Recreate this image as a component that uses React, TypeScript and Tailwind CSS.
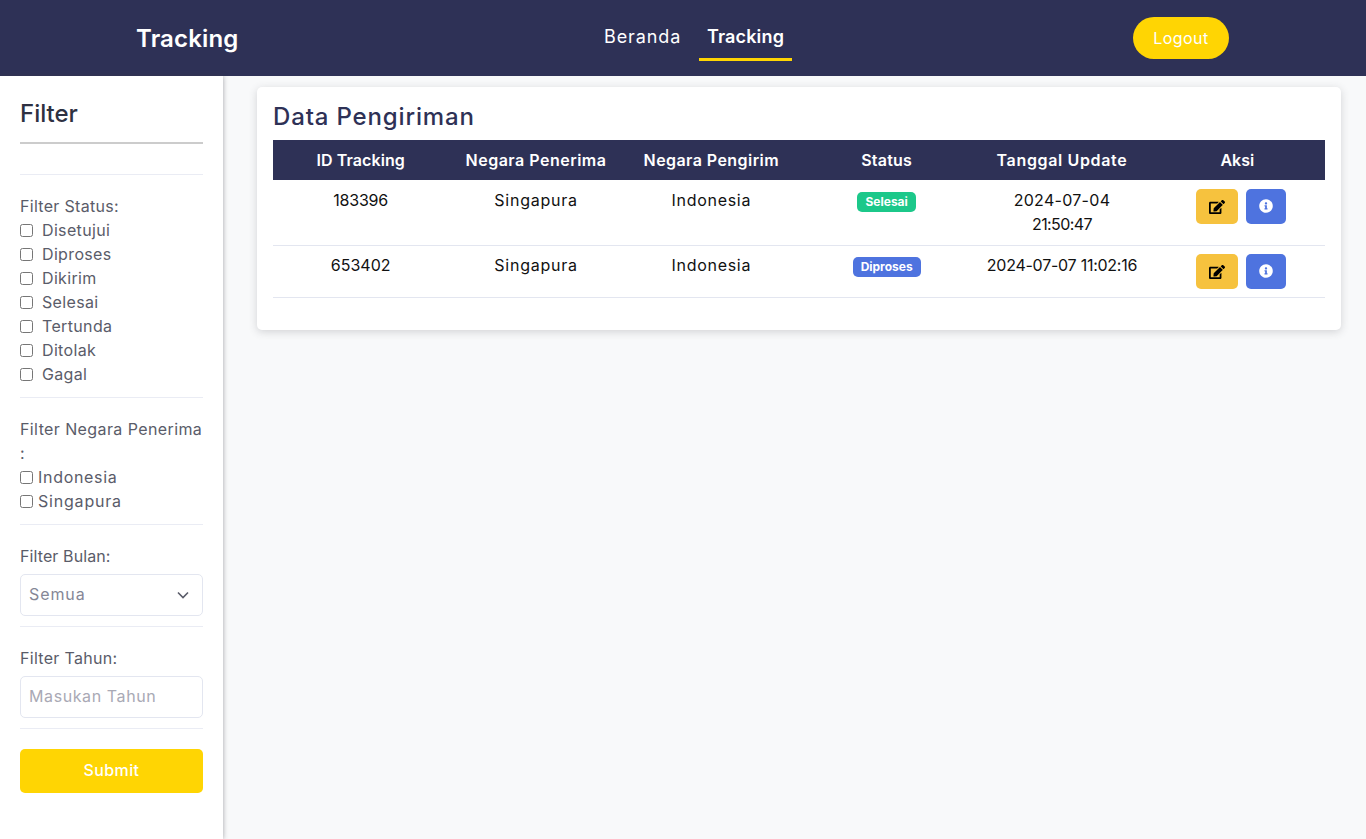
import React from "react";
import { FaEdit, FaInfoCircle } from "react-icons/fa";

const font = "font-['Inter','Noto_Sans',sans-serif]";

function Check({ label, gap, track }: { label: string; gap: string; track?: string }) {
  return (
    <label className={`flex items-center h-6 ${gap}`}>
      <input type="checkbox" className="w-[13px] h-[13px] m-0" />
      <span className={track ?? "tracking-[0.35px]"}>{label}</span>
    </label>
  );
}

function Rule() {
  return <hr className="border-0 border-t border-[#eaecf4]" />;
}

function Row(props: {
  id: string;
  idTrack: string;
  badge: string;
  badgeClass: string;
  date: React.ReactNode;
  textPt: string;
  badgePt: string;
  btnPt: string;
  pb: string;
}) {
  const { id, idTrack, badge, badgeClass, date, textPt, badgePt, btnPt, pb } = props;
  const base = `align-top text-center px-3 font-normal ${pb}`;
  return (
    <tr className="border-b border-[#e3e6f0]">
      <td className={`${base} ${textPt} ${idTrack}`}>{id}</td>
      <td className={`${base} ${textPt} tracking-[0.75px]`}>Singapura</td>
      <td className={`${base} ${textPt} tracking-[0.7px]`}>Indonesia</td>
      <td className={`${base} ${badgePt}`}>
        <span className={`inline-flex align-top items-center h-5 rounded-[5px] px-2 text-[12px] font-bold text-white ${badgeClass}`}>{badge}</span>
      </td>
      <td className={`${base} ${textPt} whitespace-nowrap`}>{date}</td>
      <td className={`${base} ${btnPt} !pl-5`}>
        <div className="flex justify-center gap-2">
          <button className="w-[42px] h-[35px] rounded-[5px] bg-[#f6c23e] flex items-center justify-center text-black">
            <FaEdit className="w-4 h-4" />
          </button>
          <button className="w-10 h-[35px] rounded-[5px] bg-[#4e73df] flex items-center justify-center text-white pb-px">
            <FaInfoCircle className="w-[14px] h-[14px]" />
          </button>
        </div>
      </td>
    </tr>
  );
}

export default function App() {
  const th = "text-center font-semibold px-0 text-white";
  return (
    <div className={`${font} min-h-[839px] bg-[#f8f9fa] text-[16px] leading-6 flex flex-col`}>
      <header className="h-[76px] bg-[#2e3156] flex items-center shrink-0">
        <div className="w-[604px] pl-[136px] pt-px text-[24px] font-semibold text-white tracking-[0.15px]">Tracking</div>
        <nav className="flex items-start text-white text-[18px]">
          <a className="h-[45px] pt-[9px] tracking-[0.9px] w-[95px]">Beranda</a>
          <a className="h-[45px] pt-[9px] w-[93px] text-center font-semibold tracking-[0.15px] border-b-[3px] border-[#ffd503]">Tracking</a>
        </nav>
        <div className="ml-[341px]">
          <button className="w-24 h-[42px] rounded-[21px] bg-[#ffd503] text-white tracking-[0.45px]">Logout</button>
        </div>
      </header>
      <div className="flex flex-1">
        <aside className="w-[223px] shrink-0 bg-white px-5 shadow-[0_0_5px_rgba(58,59,69,0.45)] text-[#5a5c69] relative">
          <h2 className="text-[24px] font-medium text-[#2e3142] leading-9 pt-5 pb-[10px] border-b-2 border-[#cccccc] h-[68px] box-border">Filter</h2>
          <div className="h-[30px]" />
          <Rule />
          <div className="mt-[19px] tracking-[0.3px]">Filter Status:</div>
          <Check label="Disetujui" gap="gap-[9px]" />
          <Check label="Diproses" gap="gap-[9px]" />
          <Check label="Dikirim" gap="gap-[9px]" />
          <Check label="Selesai" gap="gap-[9px]" />
          <Check label="Tertunda" gap="gap-[9px]" />
          <Check label="Ditolak" gap="gap-[9px]" />
          <Check label="Gagal" gap="gap-[9px]" />
          <div className="mt-[11px]"><Rule /></div>
          <div className="mt-[19px] tracking-[0.4px]">Filter Negara Penerima :</div>
          <Check label="Indonesia" gap="gap-[5px]" track="tracking-[0.7px]" />
          <Check label="Singapura" gap="gap-[5px]" track="tracking-[0.8px]" />
          <div className="mt-[11px]"><Rule /></div>
          <div className="mt-[19px] tracking-[0.1px]">Filter Bulan:</div>
          <div className="relative mt-[6px]">
            <select className="w-full h-[42px] appearance-none rounded-[5px] border border-[#e3e6f0] bg-white px-2 pb-0.5 text-[#858796] tracking-[0.9px]">
              <option>Semua</option>
            </select>
            <svg className="absolute right-[14px] top-[17px] w-3 h-2 text-[#5a5c69]" viewBox="0 0 12 8" fill="none" stroke="currentColor" strokeWidth="1.6">
              <path d="M1 1.5l5 5 5-5" />
            </svg>
          </div>
          <div className="mt-[10px]"><Rule /></div>
          <div className="mt-[19px] tracking-[0.3px]">Filter Tahun:</div>
          <input placeholder="Masukan Tahun" className="mt-[6px] block w-full h-[42px] rounded-[5px] border border-[#e3e6f0] bg-white px-2 pb-0.5 tracking-[0.6px] placeholder:text-[#a9a9b5]" />
          <div className="mt-[10px]"><Rule /></div>
          <button className="mt-5 w-full h-11 rounded-[5px] bg-[#ffd503] pb-0.5 text-white font-medium tracking-[0.4px]">Submit</button>
        </aside>
        <main className="flex-1 pl-[34px] pr-[25px] pt-[11px]">
          <section className="h-[243px] rounded-[5px] bg-white px-4 pt-3 shadow-[0_2px_8px_rgba(58,59,69,0.2)]">
            <h1 className="text-[24px] font-medium text-[#2e3156] leading-9 h-[41px] tracking-[0.85px]">Data Pengiriman</h1>
            <table className="w-full table-fixed border-collapse text-[#111]">
              <thead>
                <tr className="h-10 bg-[#2e3156]">
                  <th className={`${th} tracking-[0.1px] pb-px`}>ID Tracking</th>
                  <th className={`${th} tracking-[0.5px] pb-px`}>Negara Penerima</th>
                  <th className={`${th} tracking-[0.43px] pb-px`}>Negara Pengirim</th>
                  <th className={`${th} tracking-[0.2px] pb-px`}>Status</th>
                  <th className={`${th} tracking-[0.65px] pb-px`}>Tanggal Update</th>
                  <th className={`${th} pb-px`}>Aksi</th>
                </tr>
              </thead>
              <tbody>
                <Row
                  id="183396"
                  idTrack="tracking-[-0.2px]"
                  badge="Selesai"
                  badgeClass="bg-[#1cc88a]"
                  date={
                    <>
                      <span className="tracking-[0.3px]">2024-07-04</span>
                      <br />
                      <span className="tracking-[-0.6px]">21:50:47</span>
                    </>
                  }
                  textPt="pt-2"
                  badgePt="pt-3"
                  btnPt="pt-[9px]"
                  pb="pb-[9px]"
                />
                <Row
                  id="653402"
                  idTrack="tracking-[0px]"
                  badge="Diproses"
                  badgeClass="bg-[#4e73df]"
                  date={<span className="tracking-[-0.25px]">2024-07-07 11:02:16</span>}
                  textPt="pt-[7px]"
                  badgePt="pt-[11px]"
                  btnPt="pt-2"
                  pb="pb-2"
                />
              </tbody>
            </table>
          </section>
        </main>
      </div>
    </div>
  );
}
